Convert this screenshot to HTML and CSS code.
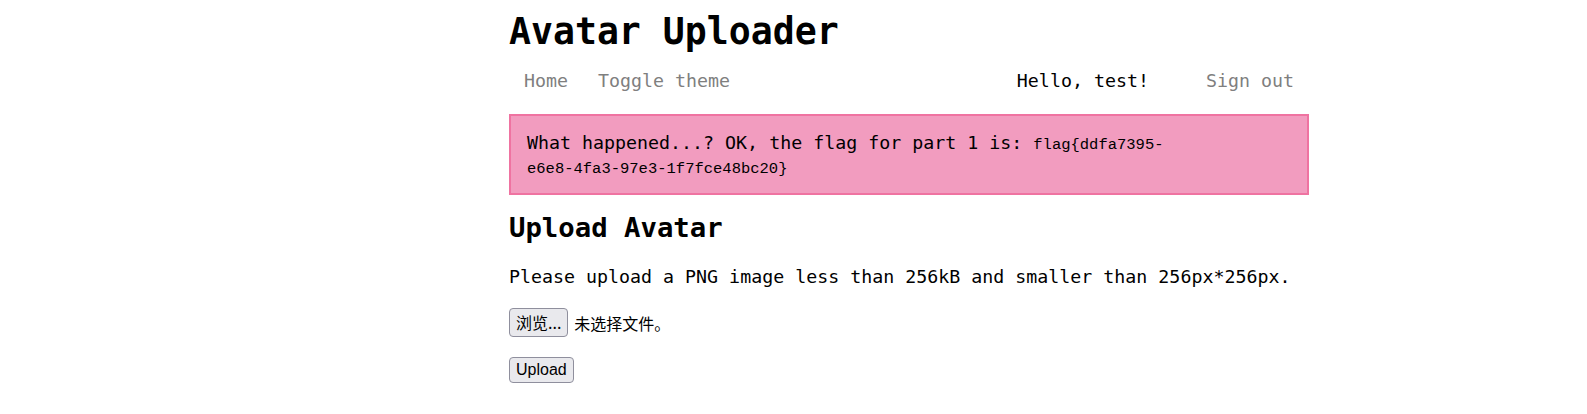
FILE: index.html
```html
<!DOCTYPE html>
<html lang="en">
<head>
<meta charset="utf-8">
<title>Avatar Uploader</title>
<link rel="stylesheet" href="styles.css">
</head>
<body>
<div class="page">
  <h1 class="title">Avatar Uploader</h1>
  <nav class="nav">
    <a class="nav-link" href="#">Home</a>
    <a class="nav-link" href="#">Toggle theme</a>
    <span class="nav-hello">Hello, test!</span>
    <a class="nav-link" href="#">Sign out</a>
  </nav>
  <div class="alert">What happened...? OK, the flag for part 1 is: <code class="flag">flag{ddfa7395-<span class="nobreak">e6e8-4fa3-97e3-1f7fce48bc20}</span></code></div>
  <h2 class="subtitle">Upload Avatar</h2>
  <p class="hint">Please upload a PNG image less than 256kB and smaller than 256px*256px.</p>
  <form class="upload-form">
    <div class="file-row">
      <button type="button" class="btn btn-browse">浏览...</button>
      <span class="file-status">未选择文件。</span>
    </div>
    <div class="submit-row">
      <button type="button" class="btn btn-upload">Upload</button>
    </div>
  </form>
</div>
</body>
</html>
```

FILE: styles.css
```css
html, body {
  margin: 0;
  padding: 0;
  background: #ffffff;
}
body {
  font-family: "DejaVu Sans Mono", "Liberation Mono", monospace;
  color: #000;
}
.page {
  width: 800px;
  margin-left: 509px;
}
.title {
  margin: 10px 0 0 0;
  font-size: 36.5px;
  line-height: 44px;
  font-weight: bold;
  letter-spacing: 0;
}
.nav {
  display: flex;
  align-items: baseline;
  margin-top: 15px;
  font-size: 18.3px;
  line-height: 24px;
}
.nav-link {
  color: #7f7f7f;
  text-decoration: none;
  padding: 0 15px;
}
.nav-hello {
  margin-left: auto;
  padding: 0 42px 0 15px;
  color: #000;
}
.alert {
  margin-top: 21px;
  background: #f29cbf;
  border: 2px solid #ef73a1;
  padding: 15px 16px 14px 16px;
  font-size: 18.3px;
  line-height: 24px;
}
.flag {
  font-family: "Liberation Mono", "Courier New", monospace;
  font-size: 15.5px;
  line-height: 16px;
}
.nobreak {
  white-space: nowrap;
}
.subtitle {
  margin: 16px 0 0 0;
  font-size: 27.3px;
  line-height: 33px;
  font-weight: bold;
}
.hint {
  margin: 22px 0 0 0;
  font-size: 18.3px;
  line-height: 22px;
}
.upload-form {
  margin-top: 20px;
}
.file-row {
  display: flex;
  align-items: center;
  gap: 6px;
}
.submit-row {
  margin-top: 20px;
}
.btn {
  background: #e9e9ed;
  border: 1px solid #8f8f9d;
  border-radius: 4px;
  color: #000;
  padding: 0 6px;
  margin: 0;
}
.btn-browse {
  font-family: "Noto Sans CJK SC", "Noto Sans", sans-serif;
  font-size: 16px;
  height: 29px;
  line-height: 27px;
}
.file-status {
  font-family: "Noto Sans CJK SC", "Noto Sans", sans-serif;
  font-size: 16px;
}
.btn-upload {
  font-family: "Liberation Sans", Arial, sans-serif;
  font-size: 16px;
  height: 26px;
  line-height: 24px;
}
```
